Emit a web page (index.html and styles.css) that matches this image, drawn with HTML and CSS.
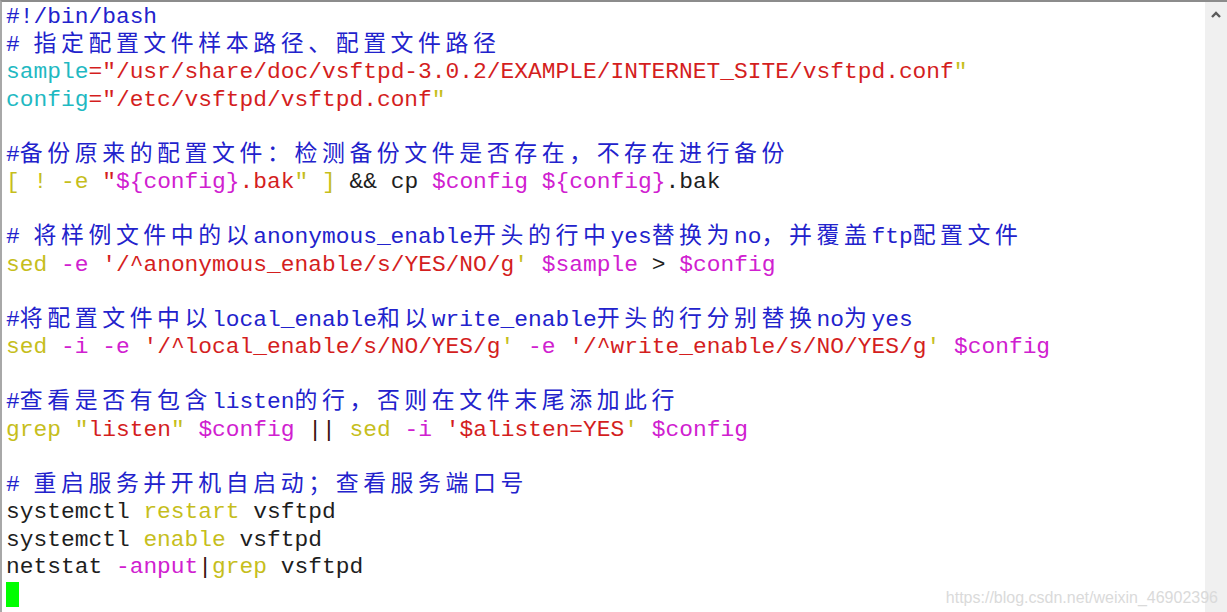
FILE: index.html
```html
<!DOCTYPE html>
<html lang="zh-CN">
<head>
<meta charset="utf-8">
<title>vsftpd script</title>
<link rel="stylesheet" href="styles.css">
</head>
<body>
<div class="screen">
  <pre class="code"><span class="b">#!/bin/bash</span>
<span class="b"># <span class="c">指定配置文件样本路径、配置文件路径</span></span>
<span class="cy">sample</span><span class="r">="/usr/share/doc/vsftpd-3.0.2/EXAMPLE/INTERNET_SITE/vsftpd.conf</span><span class="y">"</span>
<span class="cy">config</span><span class="r">="/etc/vsftpd/vsftpd.conf</span><span class="y">"</span>

<span class="b">#<span class="c">备份原来的配置文件：检测备份文件是否存在，不存在进行备份</span></span>
<span class="y">[ ! -e </span><span class="r">"</span><span class="m">${config}</span><span class="r">.bak</span><span class="y">" ]</span><span class="k"> &amp;&amp; cp </span><span class="m">$config ${config}</span><span class="k">.bak</span>

<span class="b"># <span class="c">将样例文件中的以</span>anonymous_enable<span class="c">开头的行中</span>yes<span class="c">替换为</span>no<span class="c">，并覆盖</span>ftp<span class="c">配置文件</span></span>
<span class="y">sed</span> <span class="m">-e</span> <span class="r">'/^anonymous_enable/s/YES/NO/g</span><span class="y">'</span> <span class="m">$sample</span> <span class="k">&gt;</span> <span class="m">$config</span>

<span class="b">#<span class="c">将配置文件中以</span>local_enable<span class="c">和以</span>write_enable<span class="c">开头的行分别替换</span>no<span class="c">为</span>yes</span>
<span class="y">sed</span> <span class="m">-i -e</span> <span class="r">'/^local_enable/s/NO/YES/g</span><span class="y">'</span> <span class="m">-e</span> <span class="r">'/^write_enable/s/NO/YES/g</span><span class="y">'</span> <span class="m">$config</span>

<span class="b">#<span class="c">查看是否有包含</span>listen<span class="c">的行，否则在文件末尾添加此行</span></span>
<span class="y">grep</span> <span class="y">"</span><span class="r">listen</span><span class="y">"</span> <span class="m">$config</span> <span class="dr">||</span> <span class="y">sed</span> <span class="m">-i</span> <span class="r">'$alisten=YES</span><span class="y">'</span> <span class="m">$config</span>

<span class="b"># <span class="c">重启服务并开机自启动；查看服务端口号</span></span>
<span class="k">systemctl </span><span class="y">restart</span><span class="k"> vsftpd</span>
<span class="k">systemctl </span><span class="y">enable</span><span class="k"> vsftpd</span>
<span class="k">netstat </span><span class="m">-anput</span><span class="dr">|</span><span class="y">grep</span><span class="k"> vsftpd</span>
<span class="cursor"></span></pre>
  <div class="scrollbar">
    <svg class="arrow" width="10" height="7" viewBox="0 0 10 7"><path d="M1 6 L5 2 L9 6" fill="none" stroke="#5a5a5a" stroke-width="2.4"/></svg>
  </div>
  <div class="watermark">https://blog.csdn.net/weixin_46902396</div>
</div>
</body>
</html>
```
FILE: styles.css
```css
html, body {
  margin: 0;
  padding: 0;
  background: #ffffff;
}

.screen {
  position: relative;
  width: 1227px;
  height: 612px;
  box-sizing: border-box;
  border-top: 2px solid #8c8c8c;
  border-left: 2px solid #a8a8a8;
  display: flex;
  overflow: hidden;
  background: #ffffff;
}

.code {
  flex: 1;
  margin: 0;
  padding: 2px 0 0 4px;
  font-family: "Liberation Mono", "Noto Sans CJK SC", monospace;
  font-size: 22.9px;
  line-height: 27.52px;
  color: #1e1e1e;
  white-space: pre;
}

.c {
  letter-spacing: 4.58px;
}

.b { color: #2222cc; }
.cy { color: #1fb9c2; }
.r { color: #d41e1e; }
.y { color: #c6be1c; }
.m { color: #d020d0; }
.k { color: #1e1e1e; }
.dr { color: #3a1010; }

.cursor {
  display: inline-block;
  width: 13px;
  height: 25px;
  background: #00ff00;
  vertical-align: top;
}

.scrollbar {
  width: 22px;
  flex: none;
  background: #f0f0f0;
  display: flex;
  justify-content: center;
  padding-top: 9px;
  box-sizing: border-box;
  align-items: flex-start;
}

.arrow {
  display: block;
}

.watermark {
  position: absolute;
  right: 9px;
  bottom: 5px;
  font-family: "Liberation Sans", Arial, sans-serif;
  font-size: 16px;
  color: #dadada;
  white-space: nowrap;
}
```
